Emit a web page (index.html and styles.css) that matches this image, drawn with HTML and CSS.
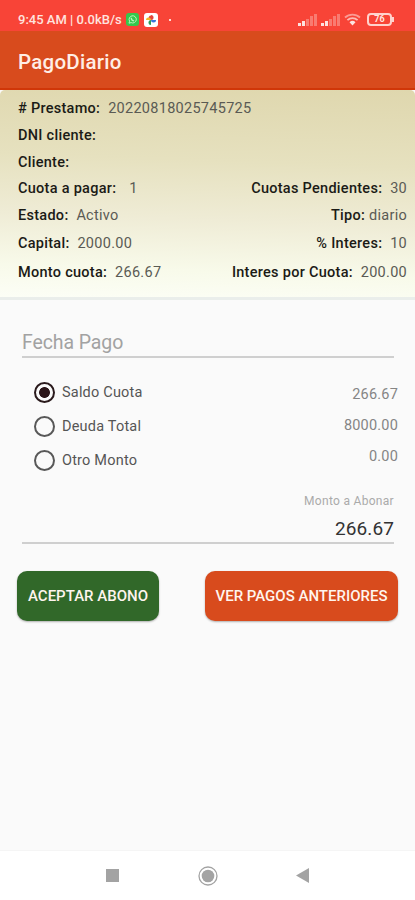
FILE: index.html
```html
<!DOCTYPE html>
<html lang="es">
<head>
    <meta charset="UTF-8">
    <meta name="viewport" content="width=device-width, initial-scale=1.0">
    <title>PagoDiario</title>
    <link rel="stylesheet" href="styles.css">
</head>
<body>
    <div class="status-bar">
        <span class="clock">9:45 AM | 0.0kB/s</span>
        <svg class="chat-icon" width="13" height="13" viewBox="0 0 13 13">
            <rect width="13" height="13" rx="3" fill="#35c84c"/>
            <path d="M3 10.2l.6-2a3.6 3.6 0 1 1 1.5 1.4z" fill="none" stroke="#b9f5bd"/>
            <path d="M5.2 4.8c0 2 1.2 3 3 3.2" fill="none" stroke="#b9f5bd" stroke-width="1.2"/>
        </svg>
        <svg class="photos-icon" width="14" height="14" viewBox="0 0 14 14">
            <rect width="14" height="14" rx="3" fill="#fff"/>
            <path d="M7 7V2a2.5 2.5 0 0 1 0 5z" fill="#e4453a"/>
            <path d="M7 7V2.500a2.300 2.300 0 0 0-2 3.500z" fill="#e4453a"/>
            <path d="M7 7h5a2.5 2.5 0 0 1-5 0z" fill="#3777dc"/>
            <path d="M7 7v5a2.5 2.5 0 0 1 0-5z" fill="#2c9c58"/>
            <path d="M7 7H2a2.5 2.5 0 0 1 5 0z" fill="#f1b928"/>
        </svg>
        <span class="dot"></span>
        <div class="indicators">
            <svg width="19" height="13" viewBox="0 0 19 13" fill="#fff">
                <path d="M0 10h3v3H0zM4 8h3v5H4z"/>
                <path d="M8 6h3v7H8zM12 3h3v10h-3zM16 1h3v12h-3z" opacity=".35"/>
            </svg>
            <svg width="19" height="13" viewBox="0 0 19 13" fill="#fff">
                <path d="M0 10h3v3H0zM4 8h3v5H4z"/>
                <path d="M8 6h3v7H8zM12 3h3v10h-3zM16 1h3v12h-3z" opacity=".35"/>
            </svg>
            <svg class="wifi-icon" width="17" height="13" viewBox="0 0 17 13" fill="none" stroke="#fff" stroke-width="1.8">
                <path d="M1 4.500a11 11 0 0 1 15 0" opacity=".55"/>
                <path d="M3.400 7.100a7.500 7.500 0 0 1 10.200 0" opacity=".75"/>
                <path d="M5.500 9.200a4.400 4.400 0 0 1 6 0L8.500 12.500z" fill="#fff" stroke="none"/>
            </svg>
            <span class="battery">76</span>
        </div>
    </div>

    <header class="app-bar">
        <h1>PagoDiario</h1>
    </header>

    <section class="loan">
        <div class="row"><p><b># Prestamo:</b> <span>20220818025745725</span></p></div>
        <div class="row"><p><b>DNI cliente:</b></p></div>
        <div class="row"><p><b>Cliente:</b></p></div>
        <div class="row">
            <p><b>Cuota a pagar:</b> <span class="fee-number">1</span></p>
            <p><b>Cuotas Pendientes:</b> <span>30</span></p>
        </div>
        <div class="row">
            <p><b>Estado:</b> <span>Activo</span></p>
            <p class="type"><b>Tipo:</b> <span>diario</span></p>
        </div>
        <div class="row">
            <p><b>Capital:</b> <span>2000.00</span></p>
            <p><b>% Interes:</b> <span>10</span></p>
        </div>
        <div class="row">
            <p><b>Monto cuota:</b> <span>266.67</span></p>
            <p><b>Interes por Cuota:</b> <span>200.00</span></p>
        </div>
    </section>

    <main>
        <div class="field date">Fecha Pago</div>

        <div class="options">
            <div class="choices">
                <div class="choice"><i class="radio checked"></i>Saldo Cuota</div>
                <div class="choice"><i class="radio"></i>Deuda Total</div>
                <div class="choice"><i class="radio"></i>Otro Monto</div>
            </div>
            <div class="amounts">
                <span>266.67</span>
                <span>8000.00</span>
                <span>0.00</span>
            </div>
        </div>

        <div class="field payment">
            <label>Monto a Abonar</label>
            <span>266.67</span>
        </div>

        <div class="buttons">
            <button class="accept">ACEPTAR ABONO</button>
            <button class="previous">VER PAGOS ANTERIORES</button>
        </div>
    </main>

    <nav class="nav-bar">
        <svg width="13" height="13" viewBox="0 0 13 13"><rect width="13" height="13" fill="#a3a3a3"/></svg>
        <svg width="20" height="20" viewBox="0 0 20 20">
            <circle cx="10" cy="10" r="9" fill="none" stroke="#a3a3a3" stroke-width="1.3"/>
            <circle cx="10" cy="10" r="6.3" fill="#a3a3a3"/>
        </svg>
        <svg width="13" height="15" viewBox="0 0 13 15"><path d="M0 7.500L13 0v15z" fill="#a3a3a3"/></svg>
    </nav>
</body>
</html>
```
FILE: styles.css
```css
* {
    box-sizing: border-box;
}
body {
    font-family: Roboto, sans-serif;
    margin: 0;
    height: 900px;
    display: flex;
    flex-direction: column;
    background-color: #fafafa;
    color: #222;
}
p, h1 {
    margin: 0;
}
.status-bar {
    height: 31px;
    padding: 8px 20px 0 18px;
    display: flex;
    align-items: center;
    background-color: #f84437;
    color: #ffe3df;
}
.clock {
    width: 105px;
    font-size: 13px;
    font-weight: 500;
    white-space: nowrap;
}
.chat-icon {
    margin-left: 3px;
}
.photos-icon {
    margin-left: 5px;
}
.dot {
    width: 2px;
    height: 2px;
    margin-left: 11px;
    background: #ffd9d4;
}
.indicators {
    margin-left: auto;
    display: flex;
    align-items: center;
    gap: 4px;
    margin-right: 3px;
}
.indicators svg {
    opacity: 0.85;
}
.battery {
    position: relative;
    width: 25px;
    height: 13px;
    margin-left: 2px;
    border: 2px solid #ffd2cc;
    border-radius: 4px;
    font-size: 9px;
    font-weight: 700;
    line-height: 9px;
    text-align: center;
}
.battery::after {
    content: "";
    position: absolute;
    right: -4px;
    top: 2px;
    width: 2px;
    height: 5px;
    background: #ffd2cc;
}
.app-bar {
    height: 59px;
    padding: 4px 18px 0;
    display: flex;
    align-items: center;
    background-color: #d84b1d;
    border-bottom: 2px solid #d03608;
    color: #ffeee6;
}
.app-bar h1 {
    font-size: 20.5px;
    font-weight: 500;
    letter-spacing: 0.25px;
}
.loan {
    height: 210px;
    padding: 5px 8px 0 18px;
    display: grid;
    grid-template-rows: 27px 27px 26px 27px 27px 29px 29px;
    background: linear-gradient(182deg, #dfd7ae, #e6e1bf 35%, #efecd6 62%, #f8faea 85%, #fcfef6);
    border-bottom: 3px solid #eaeeeb;
    border-radius: 5px 5px 0 0;
    font-size: 14.5px;
}
.row {
    display: flex;
    justify-content: space-between;
    align-items: center;
    letter-spacing: 0.28px;
}
.row b {
    font-weight: 500;
    color: #1b1b16;
}
.row span {
    margin-left: 4px;
    color: #5a5a54;
}
.row .fee-number {
    margin-left: 9px;
}
.type span {
    margin-left: 0;
}
main {
    flex: 1;
    padding: 26px 17px 0;
}
.field {
    margin: 0 4px 0 5px;
    border-bottom: 2px solid #cfcfcf;
}
.date {
    height: 32px;
    line-height: 33px;
    font-size: 19.5px;
    letter-spacing: -0.1px;
    color: #a2a2a2;
}
.options {
    display: flex;
    justify-content: space-between;
    margin-top: 17px;
    height: 118px;
    font-size: 14.5px;
    letter-spacing: 0.2px;
}
.choice {
    display: flex;
    align-items: center;
    height: 34px;
    padding-left: 17px;
    color: #555;
}
.radio {
    width: 21px;
    height: 21px;
    margin-right: 7px;
    border: 2px solid #585858;
    border-radius: 50%;
}
.checked {
    border-color: #2a1a1c;
    background: radial-gradient(circle, #2a1418 5px, transparent 5.8px);
}
.amounts {
    display: flex;
    flex-direction: column;
    align-items: flex-end;
    padding-top: 4px;
    line-height: 31px;
    color: #858585;
}
.payment {
    height: 51px;
    display: flex;
    flex-direction: column;
    align-items: flex-end;
}
.payment label {
    margin-top: 1px;
    font-size: 12px;
    line-height: 14px;
    letter-spacing: 0.3px;
    color: #aaa;
}
.payment span {
    margin-top: 9px;
    font-size: 19px;
    line-height: 24px;
    letter-spacing: 0.1px;
    color: #333;
}
.buttons {
    display: flex;
    justify-content: space-between;
    margin-top: 27px;
}
button {
    height: 50px;
    padding: 0;
    border: none;
    border-radius: 10px;
    box-shadow: 0 1px 2px rgba(0, 0, 0, 0.3);
    font-family: inherit;
    font-size: 15px;
    font-weight: 500;
    color: #fff5ee;
}
.accept {
    width: 142px;
    background-color: #316829;
}
.previous {
    width: 193px;
    background-color: #d84b1d;
}
.nav-bar {
    height: 50px;
    display: flex;
    align-items: center;
    justify-content: space-between;
    padding: 0 106px;
    background-color: #fff;
    border-top: 1px solid #f5f5f5;
}
```
